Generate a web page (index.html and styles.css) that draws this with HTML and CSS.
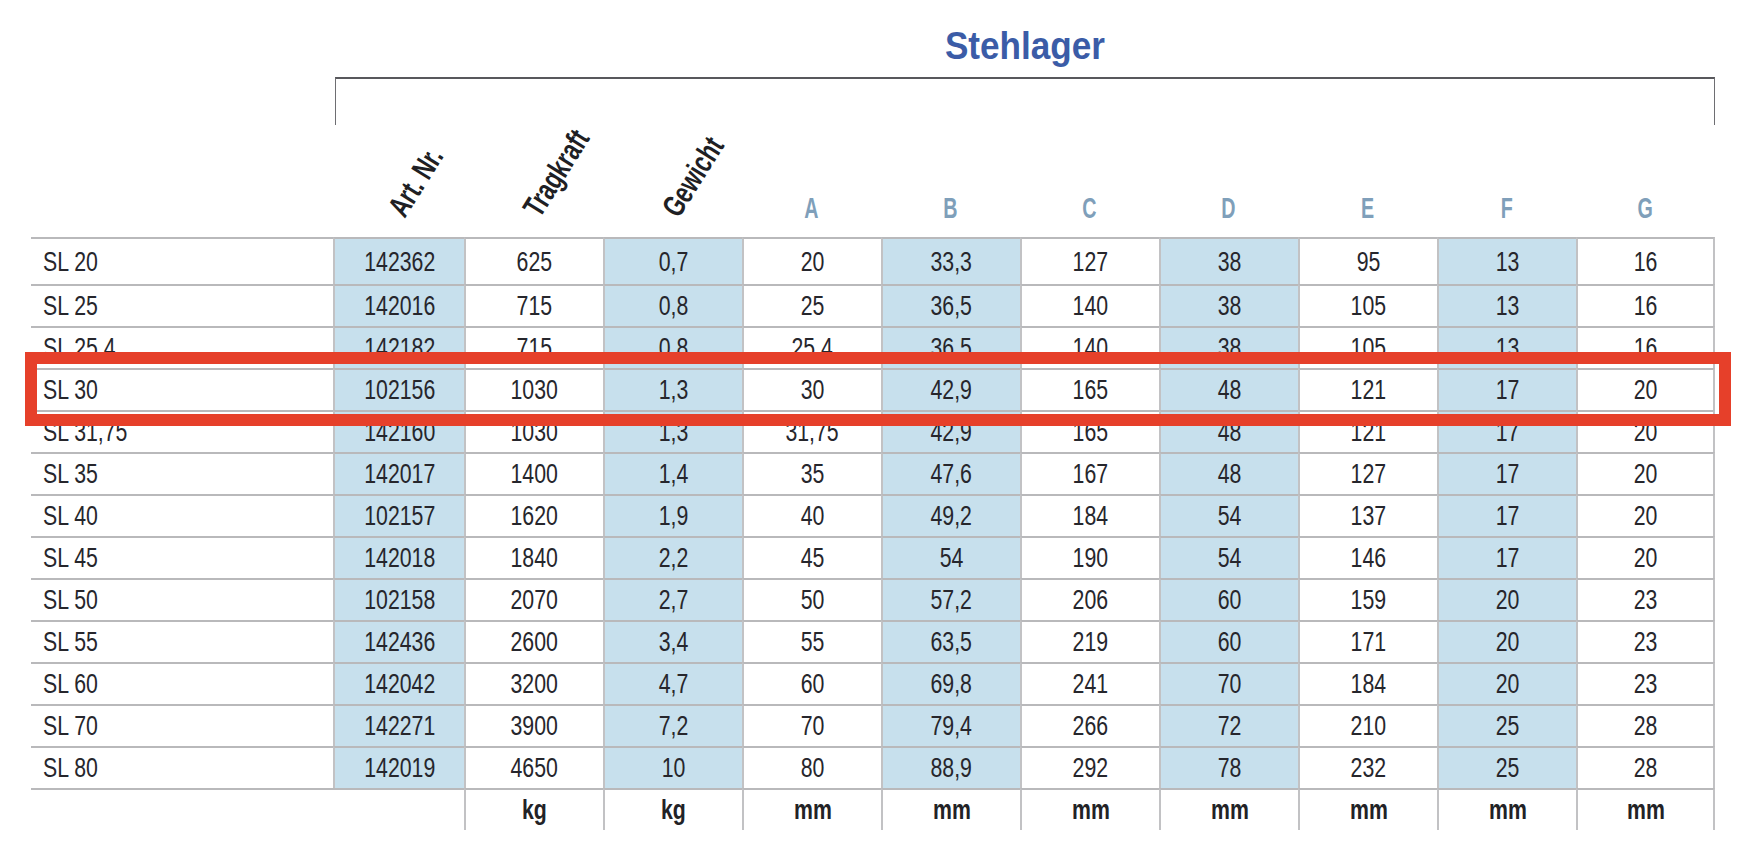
FILE: index.html
```html
<!DOCTYPE html>
<html lang="de">
<head>
<meta charset="utf-8">
<title>Stehlager</title>
<link rel="stylesheet" href="styles.css">
</head>
<body>
<div class="page">
  <div class="head">
    <div class="group">
      <h1 class="title"><span>Stehlager</span></h1>
      <div class="bracket"></div>
    </div>
  </div>
  <div class="colheads">
    <div class="ch"></div>
    <div class="ch rot-cell"><span class="rot">Art. Nr.</span></div>
    <div class="ch rot-cell"><span class="rot">Tragkraft</span></div>
    <div class="ch rot-cell"><span class="rot">Gewicht</span></div>
    <div class="ch letter"><span>A</span></div>
    <div class="ch letter"><span>B</span></div>
    <div class="ch letter"><span>C</span></div>
    <div class="ch letter"><span>D</span></div>
    <div class="ch letter"><span>E</span></div>
    <div class="ch letter"><span>F</span></div>
    <div class="ch letter"><span>G</span></div>
  </div>
  <div class="table">
    <div class="row first"><div class="c name"><span>SL 20</span></div><div class="c b"><span>142362</span></div><div class="c"><span>625</span></div><div class="c b"><span>0,7</span></div><div class="c"><span>20</span></div><div class="c b"><span>33,3</span></div><div class="c"><span>127</span></div><div class="c b"><span>38</span></div><div class="c"><span>95</span></div><div class="c b"><span>13</span></div><div class="c"><span>16</span></div></div>
    <div class="row"><div class="c name"><span>SL 25</span></div><div class="c b"><span>142016</span></div><div class="c"><span>715</span></div><div class="c b"><span>0,8</span></div><div class="c"><span>25</span></div><div class="c b"><span>36,5</span></div><div class="c"><span>140</span></div><div class="c b"><span>38</span></div><div class="c"><span>105</span></div><div class="c b"><span>13</span></div><div class="c"><span>16</span></div></div>
    <div class="row"><div class="c name"><span>SL 25,4</span></div><div class="c b"><span>142182</span></div><div class="c"><span>715</span></div><div class="c b"><span>0,8</span></div><div class="c"><span>25,4</span></div><div class="c b"><span>36,5</span></div><div class="c"><span>140</span></div><div class="c b"><span>38</span></div><div class="c"><span>105</span></div><div class="c b"><span>13</span></div><div class="c"><span>16</span></div></div>
    <div class="row"><div class="c name"><span>SL 30</span></div><div class="c b"><span>102156</span></div><div class="c"><span>1030</span></div><div class="c b"><span>1,3</span></div><div class="c"><span>30</span></div><div class="c b"><span>42,9</span></div><div class="c"><span>165</span></div><div class="c b"><span>48</span></div><div class="c"><span>121</span></div><div class="c b"><span>17</span></div><div class="c"><span>20</span></div></div>
    <div class="row"><div class="c name"><span>SL 31,75</span></div><div class="c b"><span>142160</span></div><div class="c"><span>1030</span></div><div class="c b"><span>1,3</span></div><div class="c"><span>31,75</span></div><div class="c b"><span>42,9</span></div><div class="c"><span>165</span></div><div class="c b"><span>48</span></div><div class="c"><span>121</span></div><div class="c b"><span>17</span></div><div class="c"><span>20</span></div></div>
    <div class="row"><div class="c name"><span>SL 35</span></div><div class="c b"><span>142017</span></div><div class="c"><span>1400</span></div><div class="c b"><span>1,4</span></div><div class="c"><span>35</span></div><div class="c b"><span>47,6</span></div><div class="c"><span>167</span></div><div class="c b"><span>48</span></div><div class="c"><span>127</span></div><div class="c b"><span>17</span></div><div class="c"><span>20</span></div></div>
    <div class="row"><div class="c name"><span>SL 40</span></div><div class="c b"><span>102157</span></div><div class="c"><span>1620</span></div><div class="c b"><span>1,9</span></div><div class="c"><span>40</span></div><div class="c b"><span>49,2</span></div><div class="c"><span>184</span></div><div class="c b"><span>54</span></div><div class="c"><span>137</span></div><div class="c b"><span>17</span></div><div class="c"><span>20</span></div></div>
    <div class="row"><div class="c name"><span>SL 45</span></div><div class="c b"><span>142018</span></div><div class="c"><span>1840</span></div><div class="c b"><span>2,2</span></div><div class="c"><span>45</span></div><div class="c b"><span>54</span></div><div class="c"><span>190</span></div><div class="c b"><span>54</span></div><div class="c"><span>146</span></div><div class="c b"><span>17</span></div><div class="c"><span>20</span></div></div>
    <div class="row"><div class="c name"><span>SL 50</span></div><div class="c b"><span>102158</span></div><div class="c"><span>2070</span></div><div class="c b"><span>2,7</span></div><div class="c"><span>50</span></div><div class="c b"><span>57,2</span></div><div class="c"><span>206</span></div><div class="c b"><span>60</span></div><div class="c"><span>159</span></div><div class="c b"><span>20</span></div><div class="c"><span>23</span></div></div>
    <div class="row"><div class="c name"><span>SL 55</span></div><div class="c b"><span>142436</span></div><div class="c"><span>2600</span></div><div class="c b"><span>3,4</span></div><div class="c"><span>55</span></div><div class="c b"><span>63,5</span></div><div class="c"><span>219</span></div><div class="c b"><span>60</span></div><div class="c"><span>171</span></div><div class="c b"><span>20</span></div><div class="c"><span>23</span></div></div>
    <div class="row"><div class="c name"><span>SL 60</span></div><div class="c b"><span>142042</span></div><div class="c"><span>3200</span></div><div class="c b"><span>4,7</span></div><div class="c"><span>60</span></div><div class="c b"><span>69,8</span></div><div class="c"><span>241</span></div><div class="c b"><span>70</span></div><div class="c"><span>184</span></div><div class="c b"><span>20</span></div><div class="c"><span>23</span></div></div>
    <div class="row"><div class="c name"><span>SL 70</span></div><div class="c b"><span>142271</span></div><div class="c"><span>3900</span></div><div class="c b"><span>7,2</span></div><div class="c"><span>70</span></div><div class="c b"><span>79,4</span></div><div class="c"><span>266</span></div><div class="c b"><span>72</span></div><div class="c"><span>210</span></div><div class="c b"><span>25</span></div><div class="c"><span>28</span></div></div>
    <div class="row"><div class="c name"><span>SL 80</span></div><div class="c b"><span>142019</span></div><div class="c"><span>4650</span></div><div class="c b"><span>10</span></div><div class="c"><span>80</span></div><div class="c b"><span>88,9</span></div><div class="c"><span>292</span></div><div class="c b"><span>78</span></div><div class="c"><span>232</span></div><div class="c b"><span>25</span></div><div class="c"><span>28</span></div></div>
    <div class="row units"><div class="c blank"></div><div class="c"><span>kg</span></div><div class="c"><span>kg</span></div><div class="c"><span>mm</span></div><div class="c"><span>mm</span></div><div class="c"><span>mm</span></div><div class="c"><span>mm</span></div><div class="c"><span>mm</span></div><div class="c"><span>mm</span></div><div class="c"><span>mm</span></div></div>
  </div>
  <div class="highlight"></div>
</div>
</body>
</html>
```

FILE: styles.css
```css
* { box-sizing: border-box; }

html, body {
  margin: 0;
  padding: 0;
  background: #ffffff;
}

body {
  font-family: "Liberation Sans", Arial, sans-serif;
  color: #26262c;
}

.page {
  position: relative;
  width: 1751px;
  height: 864px;
  padding-left: 31px;
  --cols: 302px 131px repeat(9, 139px);
}

/* ---------- heading ---------- */
.head {
  display: grid;
  grid-template-columns: var(--cols);
  height: 125px;
}

.group {
  grid-column: 2 / -1;
  padding-left: 2px;
}

.title {
  margin: 26px 0 0 0;
  height: 39px;
  font-size: 39px;
  line-height: 39px;
  font-weight: 700;
  color: #3b5ca7;
  text-align: center;
}

.title span {
  display: inline-block;
  transform: scaleX(0.9);
}

.bracket {
  margin-top: 12px;
  height: 48px;
  border-top: 2px solid #58585c;
  border-left: 1px solid #6e6e72;
  border-right: 1px solid #6e6e72;
}

.colheads {
  display: grid;
  grid-template-columns: var(--cols);
  height: 112px;
}

.ch {
  display: flex;
  align-items: flex-end;
}

.rot-cell {
  padding-left: calc(50% + 6px);
  padding-bottom: 13px;
}

.rot {
  display: inline-block;
  white-space: nowrap;
  font-size: 31px;
  line-height: 31px;
  font-weight: 700;
  color: #1f1f24;
  transform-origin: 0 84.6%;
  transform: rotate(-58deg) scaleX(0.72);
}

.letter {
  justify-content: center;
  padding-bottom: 14px;
}

.letter span {
  display: inline-block;
  font-size: 29px;
  line-height: 29px;
  font-weight: 700;
  color: #7f9fba;
  transform: scaleX(0.68);
}

/* ---------- table ---------- */
.row {
  display: grid;
  grid-template-columns: var(--cols);
  height: 42px;
}

.row.first {
  height: 47px;
}

.c {
  display: flex;
  align-items: center;
  justify-content: center;
  border-top: 2px solid #b9b9bb;
  border-left: 2px solid #c2c2c4;
  font-size: 28px;
  line-height: 28px;
  white-space: nowrap;
}

.c:last-child {
  border-right: 2px solid #c2c2c4;
}

.c span {
  display: inline-block;
  transform: scaleX(0.76);
}

.c.b {
  background: #c7e0ed;
}

.c.name {
  border-left: none;
  justify-content: flex-start;
  padding-left: 12px;
}

.c.name span {
  transform-origin: 0 50%;
}

.units .c {
  font-weight: 700;
  color: #222226;
}

.units .c.blank {
  grid-column: span 2;
  border-left: none;
}

/* highlight frame drawn over the SL 30 row */
.highlight {
  position: absolute;
  left: 25px;
  top: 352px;
  width: 1706px;
  height: 74px;
  border: 12px solid #e6402a;
  pointer-events: none;
}
```
